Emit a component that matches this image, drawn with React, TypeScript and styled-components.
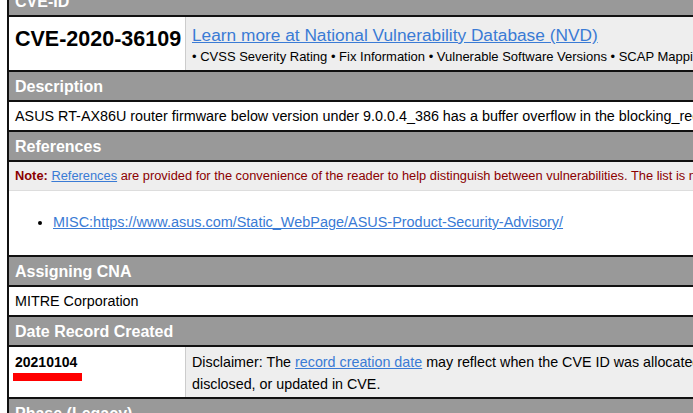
import React from "react";
import styled, { createGlobalStyle } from "styled-components";

const Global = createGlobalStyle`
  html, body { margin: 0; padding: 0; background: #fff; overflow: hidden; }
  body { font-family: "Liberation Sans", Arial, sans-serif; }
`;

const Page = styled.div`
  padding-left: 7px;
  margin-top: -13px;
  width: 1100px;
`;

const Table = styled.div`
  border-left: 2px solid #111;
  border-right: 2px solid #111;
  display: flex;
  flex-direction: column;
`;

const Header = styled.div`
  background: #999;
  color: #fff;
  font-weight: bold;
  font-size: 16px;
  height: 28px;
  line-height: 29px;
  padding-left: 6px;
  border-bottom: 2px solid #111;
`;

const Row = styled.div<{ $h: number }>`
  display: grid;
  grid-template-columns: 177px 1fr;
  min-height: ${(p) => p.$h}px;
  border-bottom: 2px solid #111;
`;

const LeftCell = styled.div`
  background: #fff;
  padding: 0 6px;
  border-right: 1px solid #ccc;
  display: flex;
  flex-direction: column;
`;

const RightCell = styled.div`
  background: #eee;
  padding: 0 6px;
  display: flex;
  flex-direction: column;
`;

const CveId = styled.div`
  font-size: 21.5px;
  font-weight: bold;
  color: #000;
  margin-top: 10px;
  white-space: nowrap;
`;

const BigLink = styled.a`
  font-size: 17.3px;
  color: #3a7bd5;
  text-decoration: underline;
  margin-top: 8px;
  white-space: nowrap;
`;

const Bullets = styled.div`
  font-size: 13px;
  color: #000;
  margin-top: 3px;
  white-space: nowrap;
`;

const TextRow = styled.div`
  background: #fff;
  font-size: 14.35px;
  color: #000;
  height: 28px;
  line-height: 28px;
  padding-left: 6px;
  white-space: nowrap;
  border-bottom: 2px solid #111;
`;

const Section = styled.div`
  display: flex;
  flex-direction: column;
  border-bottom: 2px solid #111;
`;

const Note = styled.div`
  background: #eee;
  color: #8b0000;
  font-size: 12.85px;
  height: 28px;
  line-height: 27px;
  padding-left: 6px;
  white-space: nowrap;
  border-bottom: 1px solid #ddd;
  a { color: #3a7bd5; }
`;

const RefList = styled.ul`
  margin: 0;
  padding: 22px 0 23px 44px;
  height: 64px;
  box-sizing: border-box;
  font-size: 14.45px;
  background: #fff;
  li { line-height: 18px; }
  a { color: #3a7bd5; white-space: nowrap; }
`;

const DateVal = styled.div`
  font-size: 14px;
  font-weight: bold;
  color: #000;
  margin-top: 7px;
`;

const RedBar = styled.div`
  background: #f00;
  width: 69px;
  height: 8px;
  margin-top: 3px;
  margin-left: -2px;
`;

const Disclaimer = styled.div`
  font-size: 14.3px;
  color: #000;
  line-height: 22px;
  margin-top: 4px;
  white-space: nowrap;
  a { color: #3a7bd5; }
`;

export default function App() {
  return (
    <>
      <Global />
      <Page>
        <Table>
          <Header>CVE-ID</Header>
          <Row $h={53}>
            <LeftCell>
              <CveId>CVE-2020-36109</CveId>
            </LeftCell>
            <RightCell>
              <BigLink href="#">Learn more at National Vulnerability Database (NVD)</BigLink>
              <Bullets>
                • CVSS Severity Rating • Fix Information • Vulnerable Software Versions • SCAP Mappings • CPE Information
              </Bullets>
            </RightCell>
          </Row>
          <Header>Description</Header>
          <TextRow>
            ASUS RT-AX86U router firmware below version under 9.0.0.4_386 has a buffer overflow in the blocking_request.cgi function of the httpd module
          </TextRow>
          <Header>References</Header>
          <Section>
            <Note>
              <b>Note:</b> <a href="#">References</a> are provided for the convenience of the reader to help distinguish between vulnerabilities. The list is not intended to be complete.
            </Note>
            <RefList>
              <li>
                <a href="#">MISC:https://www.asus.com/Static_WebPage/ASUS-Product-Security-Advisory/</a>
              </li>
            </RefList>
          </Section>
          <Header>Assigning CNA</Header>
          <TextRow>MITRE Corporation</TextRow>
          <Header>Date Record Created</Header>
          <Row $h={50}>
            <LeftCell>
              <DateVal>20210104</DateVal>
              <RedBar />
            </LeftCell>
            <RightCell>
              <Disclaimer>
                Disclaimer: The <a href="#">record creation date</a> may reflect when the CVE ID was allocated or reserved, and does not necessarily indicate when this vulnerability was discovered, shared with the affected vendor, publicly
                <br />
                disclosed, or updated in CVE.
              </Disclaimer>
            </RightCell>
          </Row>
          <Header>Phase (Legacy)</Header>
        </Table>
      </Page>
    </>
  );
}
